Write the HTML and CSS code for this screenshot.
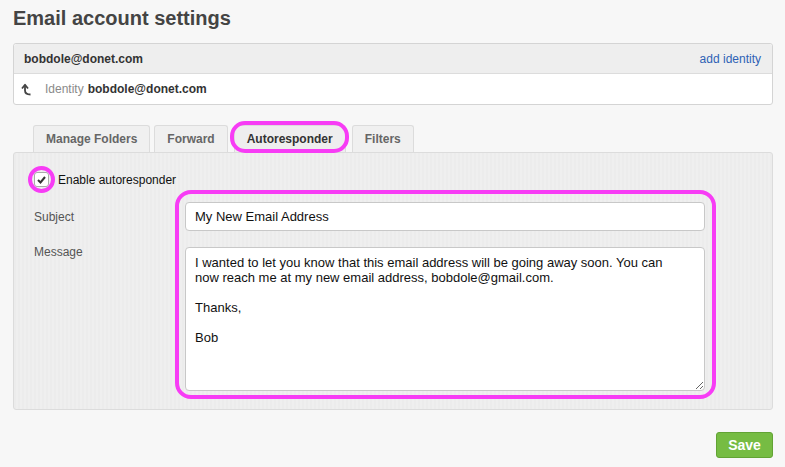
FILE: index.html
```html
<!DOCTYPE html>
<html lang="en">
<head>
  <meta charset="UTF-8" />
  <title>Email account settings</title>
  <link rel="stylesheet" href="styles.css">
</head>
<body>
  <h1 class="titulo">Email account settings</h1>

  <div class="identidades">
    <div class="ident-topo">
      <span class="ident-conta">bobdole@donet.com</span>
      <a class="ident-add" href="#">add identity</a>
    </div>
    <div class="ident-linha">
      <svg class="ident-seta" width="12" height="13" viewBox="0 0 12 13">
        <path d="M1 5.5 L4 1.8 L7 5.5" fill="none" stroke="#444" stroke-width="1.8" stroke-linejoin="round" />
        <path d="M4 3 V7.5 Q4 11.5 9.5 11.5" fill="none" stroke="#444" stroke-width="1.8" />
      </svg>
      <span class="ident-rotulo">Identity</span>
      <b>bobdole@donet.com</b>
    </div>
  </div>

  <div class="abas">
    <div class="aba">Manage Folders</div>
    <div class="aba">Forward</div>
    <div class="aba ativa marca">Autoresponder</div>
    <div class="aba">Filters</div>
  </div>

  <div class="painel">
    <label class="ativar">
      <span class="caixa marca">
        <svg width="9" height="8" viewBox="0 0 9 8">
          <path d="M1 4 L3.5 6.5 L8 1" fill="none" stroke="#333" stroke-width="2" />
        </svg>
      </span>
      Enable autoresponder
    </label>

    <div class="formulario">
      <div class="rotulos">
        <div class="rotulo">Subject</div>
        <div class="rotulo rotulo-msg">Message</div>
      </div>
      <div class="campos">
        <input class="assunto" type="text" value="My New Email Address">
        <textarea class="mensagem">I wanted to let you know that this email address will be going away soon. You can now reach me at my new email address, bobdole@gmail.com.

Thanks,

Bob</textarea>
      </div>
    </div>
  </div>

  <div class="rodape">
    <button class="salvar">Save</button>
  </div>
</body>
</html>
```

FILE: styles.css
```css
body {
  margin: 0;
  padding: 0 12px 0 13px;
  background-color: #f7f7f7;
  font-family: "Liberation Sans", Arial, sans-serif;
  font-size: 12px;
  color: #333;
}

.titulo {
  margin: 6px 0 13px;
  font-size: 20px;
  line-height: 24px;
  font-weight: bold;
  color: #444;
}

.identidades {
  border: 1px solid #d4d4d4;
  border-radius: 3px;
  background: #fff;
}

.ident-topo {
  display: flex;
  justify-content: space-between;
  align-items: center;
  height: 29px;
  padding: 0 11px 0 10px;
  background: #eee;
  border-bottom: 1px solid #dcdcdc;
  border-radius: 3px 3px 0 0;
}

.ident-conta {
  font-weight: bold;
  color: #333;
}

.ident-add {
  color: #2f62b5;
  text-decoration: none;
}

.ident-linha {
  display: flex;
  align-items: center;
  height: 30px;
  padding-left: 7px;
}

.ident-seta {
  margin-right: 12px;
}

.ident-rotulo {
  color: #8a8a8a;
  margin-right: 4px;
}

.abas {
  display: flex;
  gap: 4px;
  margin: 20px 0 0 20px;
}

.aba {
  position: relative;
  height: 27px;
  line-height: 27px;
  padding: 0 12px;
  border: 1px solid #dcdcdc;
  border-bottom: none;
  border-radius: 3px 3px 0 0;
  background: #f0f0f0;
  font-weight: bold;
  color: #666;
  box-sizing: border-box;
}

.aba.ativa {
  margin: 0 2px;
  background: #eee;
  color: #333;
}

.marca::after {
  content: "";
  position: absolute;
  top: -5px;
  left: -5px;
  right: -4px;
  bottom: -1px;
  border: 4px solid #f73cf5;
  border-radius: 15px;
}

.painel {
  border: 1px solid #dcdcdc;
  border-radius: 3px;
  background: repeating-linear-gradient(90deg, #ececec 0 2px, #efefef 2px 4px);
  padding: 18px 20px 10px;
}

.ativar {
  display: flex;
  align-items: center;
  height: 17px;
  margin-bottom: 2px;
  color: #111;
}

.caixa {
  position: relative;
  display: flex;
  align-items: center;
  justify-content: center;
  width: 13px;
  height: 13px;
  margin-right: 9px;
  border: 1px solid #aaa;
  border-radius: 3px;
  background: #fff;
}

.caixa.marca::after {
  top: -7px;
  left: -7px;
  right: -7px;
  bottom: -7px;
  border-radius: 50%;
}

.formulario {
  display: flex;
}

.rotulos {
  width: 141px;
  padding-top: 20px;
}

.rotulo {
  line-height: 14px;
  color: #555;
}

.rotulo-msg {
  margin-top: 21px;
}

.campos {
  display: flex;
  flex-direction: column;
  gap: 16px;
  width: 520px;
  padding: 8px 7px 4px 6px;
  border: 4px solid #f73cf5;
  border-radius: 16px;
}

.assunto,
.mensagem {
  box-sizing: border-box;
  width: 520px;
  border: 1px solid #c8c8c8;
  border-radius: 4px;
  background: #fff;
  font-family: "Liberation Sans", Arial, sans-serif;
  font-size: 13px;
  color: #111;
  outline: none;
}

.assunto {
  height: 29px;
  padding: 0 9px;
}

.mensagem {
  height: 144px;
  padding: 7px 28px 7px 9px;
  line-height: 15px;
  resize: both;
}

.rodape {
  display: flex;
  justify-content: flex-end;
  margin-top: 22px;
}

.salvar {
  width: 57px;
  height: 26px;
  border: 1px solid #62a334;
  border-radius: 3px;
  background: #76bc43;
  color: #fff;
  font-family: "Liberation Sans", Arial, sans-serif;
  font-size: 14px;
  font-weight: bold;
  cursor: pointer;
}
```
